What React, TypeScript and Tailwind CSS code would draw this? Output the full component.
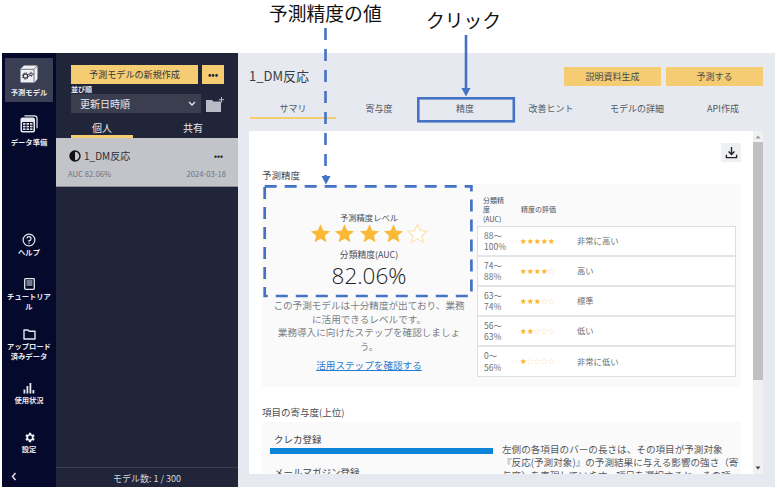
import React from "react";

const font = { fontFamily: '"Noto Sans CJK JP", "Noto Sans", sans-serif' };

function Star({ on, size }: { on: boolean; size: number }) {
  return (
    <svg width={size} height={size} viewBox="0 0 24 24" className="shrink-0">
      <path
        d="M12 1.500l3.100 7.200 7.800.7-5.900 5.100 1.800 7.600L12 18.100l-6.800 4 1.800-7.600-5.900-5.100 7.800-.7z"
        fill={on ? "#fbb938" : "#ffffff"}
        stroke={on ? "#fbb938" : "#fbe3b5"}
        strokeWidth={on ? 0 : 1.400}
      />
    </svg>
  );
}

function Stars({ n, size, gap }: { n: number; size: number; gap: string }) {
  return (
    <div className={`flex ${gap}`}>
      {[1, 2, 3, 4, 5].map((i) => (
        <Star key={i} on={i <= n} size={size} />
      ))}
    </div>
  );
}

function TopNav({ icon, label, active, cls }: { icon: React.ReactNode; label: string; active?: boolean; cls?: string }) {
  return (
    <div className={`flex h-[44px] w-[48px] flex-col items-center pt-[7px] text-center text-[7.300px] font-bold leading-[11px] text-[#e8e9ee] ${active ? "bg-[#3b3f53]" : ""} ${cls ?? ""}`}>
      {icon}
      <div className="mt-[4px]">{label}</div>
    </div>
  );
}

function BottomNav({ icon, label, cls }: { icon: React.ReactNode; label: React.ReactNode; cls?: string }) {
  return (
    <div className={`flex w-[54px] flex-col items-center text-center text-[7.300px] font-bold leading-[10px] text-[#e8e9ee] ${cls ?? ""}`}>
      <div className="flex h-[14px] items-center justify-center">{icon}</div>
      <div>{label}</div>
    </div>
  );
}

const rows = [
  ["88〜", "100%", 5, "非常に高い"],
  ["74〜", "88%", 4, "高い"],
  ["63〜", "74%", 3, "標準"],
  ["56〜", "63%", 2, "低い"],
  ["0〜", "56%", 1, "非常に低い"],
] as const;

const tabs = ["サマリ", "寄与度", "精度", "改善ヒント", "モデルの詳細", "API作成"];

export default function App() {
  return (
    <div className="relative h-[489px] w-[777px] overflow-hidden bg-white" style={font}>
      <div className="h-[53px]" />
      <div className="ml-[2px] flex h-[434px] w-[773px]">
        {/* icon rail */}
        <div className="flex w-[54px] shrink-0 flex-col items-center bg-[#050a2c] pt-[5px]">
          <TopNav
            active
            label="予測モデル"
            icon={
              <svg width="18" height="18" viewBox="0 0 18 18">
                <path d="M4 .5h12.500A1 1 0 0 1 17.500 1.500v12.500L14.500 17.500H1.500A1 1 0 0 1 .5 16.500V4z" fill="#f0f1f4" />
                <path d="M.8 4.300H14l3.300-3.300M14 4.300v13" stroke="#3b3f53" strokeWidth=".7" fill="none" />
                <circle cx="5.500" cy="11" r="2.100" fill="none" stroke="#2b2e3d" strokeWidth="1.100" />
                <circle cx="5.500" cy="11" r="3.200" fill="none" stroke="#2b2e3d" strokeWidth="1" strokeDasharray="1.200 1.300" />
                <circle cx="11" cy="9.300" r="1.300" fill="none" stroke="#2b2e3d" strokeWidth=".9" />
                <circle cx="11" cy="9.300" r="2.100" fill="none" stroke="#2b2e3d" strokeWidth=".8" strokeDasharray="1 1.100" />
              </svg>
            }
          />
          <TopNav
            cls="mt-[6px]"
            label="データ準備"
            icon={
              <svg width="18" height="18" viewBox="0 0 18 18" fill="none">
                <path d="M4.500 .8h10a2.500 2.500 0 0 1 2.500 2.500v10" stroke="#e8e9ee" strokeWidth="1.200" />
                <rect x=".5" y="2.500" width="14.500" height="15" rx="2" fill="#e8e9ee" />
                <path d="M2.500 7.500h10.500v8H2.500zM2.500 10.200h10.500M2.500 12.900h10.500M6 7.500v8M9.500 7.500v8" stroke="#050a2c" strokeWidth="1" />
              </svg>
            }
          />
          <BottomNav
            cls="mt-[81px]"
            label="ヘルプ"
            icon={
              <svg width="14" height="14" viewBox="0 0 14 14" fill="none" stroke="#e8e9ee" strokeWidth="1.200">
                <circle cx="7" cy="7" r="5.900" />
                <path d="M5 5.400A2 2 0 1 1 7 7.600v1.100" />
                <path d="M7 9.500v1.300" />
              </svg>
            }
          />
          <BottomNav
            cls="mt-[20px]"
            label={<>チュートリア<br />ル</>}
            icon={
              <svg width="11" height="12" viewBox="0 0 11 12">
                <rect x=".7" y=".7" width="9.600" height="10.600" rx=".8" fill="none" stroke="#e8e9ee" strokeWidth="1.300" />
                <path d="M2.500 3h6M2.500 5h6M2.500 7h6" stroke="#e8e9ee" strokeWidth="1.100" />
              </svg>
            }
          />
          <BottomNav
            cls="mt-[16px]"
            label={<>アップロード<br />済みデータ</>}
            icon={
              <svg width="13" height="11" viewBox="0 0 13 11" fill="none" stroke="#e8e9ee" strokeWidth="1.400">
                <path d="M1 1h4l1.200 1.300H12V10H1z" strokeLinejoin="round" />
              </svg>
            }
          />
          <BottomNav
            cls="mt-[20px]"
            label="使用状況"
            icon={
              <svg width="12" height="11" viewBox="0 0 12 11" fill="#e8e9ee">
                <rect x="0.500" y="6.500" width="1.800" height="4" />
                <rect x="3.500" y="3" width="1.800" height="7.500" />
                <rect x="6.500" y="0" width="1.800" height="10.500" />
                <rect x="9.500" y="7" width="1.800" height="3.500" />
              </svg>
            }
          />
          <BottomNav
            cls="mt-[25px]"
            label="設定"
            icon={
              <svg width="13" height="13" viewBox="0 0 24 24" fill="#f0f1f4">
                <path d="M19.400 13a7.600 7.600 0 0 0 0-2l2.100-1.600-2-3.500-2.500 1a7.600 7.600 0 0 0-1.700-1L15 3.200h-4l-.4 2.700a7.600 7.600 0 0 0-1.700 1l-2.500-1-2 3.500L6.500 11a7.600 7.600 0 0 0 0 2l-2.100 1.600 2 3.500 2.500-1a7.600 7.600 0 0 0 1.700 1l.4 2.700h4l.4-2.700a7.600 7.600 0 0 0 1.700-1l2.500 1 2-3.500zM13 15.500a3.500 3.500 0 1 1 0-7 3.500 3.500 0 0 1 0 7z" />
              </svg>
            }
          />
          <div className="mt-auto w-full pb-[6px] pl-[9px] text-[#e8e9ee]">
            <svg width="6" height="9" viewBox="0 0 6 9" fill="none" stroke="currentColor" strokeWidth="1.400" className="block">
              <path d="M4.500 1L1.500 4.500 4.500 8" />
            </svg>
          </div>
        </div>

        {/* model list */}
        <div className="flex w-[182px] shrink-0 flex-col bg-[#20253a]">
          <div className="flex gap-[4px] pl-[15px] pt-[12px]">
            <div className="flex h-[19px] w-[127px] items-center justify-center bg-[#f5cc72] text-[9.100px] text-[#33363f]">予測モデルの新規作成</div>
            <div className="flex h-[19px] w-[22px] items-center justify-center bg-[#f5cc72] text-[9px] font-bold leading-none text-[#222]">•••</div>
          </div>
          <div className="ml-[15px] h-[10px] text-[7px] font-bold leading-[10px] text-[#e8e9ee]">並び順</div>
          <div className="flex items-center gap-[5px] pl-[15px]">
            <div className="flex h-[19px] w-[130px] items-center justify-between bg-[#3b3e4f] pl-[9px] pr-[5px] text-[10px] text-[#e8e9ee]">
              <span>更新日時順</span>
              <svg width="8" height="6" viewBox="0 0 8 6" fill="none" stroke="#e8e9ee" strokeWidth="1.300">
                <path d="M1 1l3 3 3-3" />
              </svg>
            </div>
            <svg width="18" height="15" viewBox="0 0 18 15" fill="#b9bcc6" className="mt-[2px]">
              <path d="M0 3h6l1.500 1.500H15V15H0z" />
              <path d="M15.500 0v5.500M12.800 2.700h5.200" stroke="#b9bcc6" strokeWidth="1" fill="none" />
            </svg>
          </div>
          <div className="flex h-[22px] items-center pl-[15px] pt-[6px] text-[10px] text-[#e8e9ee]">
            <div className="w-[62px] text-center">個人</div>
            <div className="pl-[50px]">共有</div>
          </div>
          <div className="ml-[15px] h-[3px] w-[62px] bg-[#f5cc72]" />
          <div className="h-[49px] border-b border-[#8d909b] bg-[#c2c4c9] px-[12px] pt-[4px]">
            <div className="flex h-[27px] items-center justify-between pl-[1px] pr-[3px]">
              <div className="flex items-center gap-[3px] text-[10px] text-[#2c2f38]">
                <svg width="12" height="12" viewBox="0 0 12 12">
                  <circle cx="6" cy="6" r="5" fill="none" stroke="#111" strokeWidth="1.400" />
                  <path d="M6 1a5 5 0 0 0 0 10z" fill="#111" />
                </svg>
                <span>1_DM反応</span>
              </div>
              <span className="text-[8px] font-bold leading-none text-[#222]">•••</span>
            </div>
            <div className="flex justify-between text-[7.700px] leading-[9px] text-[#70737d]">
              <span>AUC 82.06%</span>
              <span>2024-03-18</span>
            </div>
          </div>
          <div className="flex-1" />
          <div className="flex h-[20px] items-center justify-center border-t border-[#3b3e4f] pt-[2px] text-[9px] text-[#d5d7de]">モデル数: 1 / 300</div>
        </div>

        {/* main */}
        <div className="flex min-w-0 flex-1 flex-col bg-[#e6e9ef]">
          <div className="flex h-[44px] items-center justify-between pl-[11px] pr-[12px] pt-[2px]">
            <div className="text-[13px] text-[#3a3d46]">1_DM反応</div>
            <div className="flex gap-[5px] pt-[1px]">
              <div className="flex h-[19px] w-[97px] items-center justify-center bg-[#f5cc72] text-[9px] text-[#4a4a48]">説明資料生成</div>
              <div className="flex h-[19px] w-[97px] items-center justify-center bg-[#f5cc72] text-[9px] text-[#4a4a48]">予測する</div>
            </div>
          </div>
          <div className="flex h-[22px] pl-[12px]">
            {tabs.map((t, i) => (
              <div key={t} className={`flex w-[86px] items-center justify-center border-b-2 pt-[3px] text-[9px] text-[#55585f] ${i === 0 ? "border-[#f5cc72]" : "border-transparent"}`}>
                {t}
              </div>
            ))}
          </div>
          <div className="mt-[12px] flex min-h-0 flex-1">
            <div className="ml-[11px] w-[504px] overflow-hidden bg-white pl-[13px] pr-[12px] text-[#4a4d55]">
              <div className="flex h-[38px] justify-end pt-[12px]">
                <div className="flex h-[19px] w-[20px] items-center justify-center bg-[#eef0f3]">
                  <svg width="13" height="13" viewBox="0 0 14 14" fill="none" stroke="#222" strokeWidth="1.500">
                    <path d="M7 1v8M3.800 6L7 9.200 10.200 6M1.500 9.500v3h11v-3" />
                  </svg>
                </div>
              </div>
              <div className="text-[9.500px] leading-[13px]">予測精度</div>
              <div className="mt-[2px] flex h-[203px] bg-[#fafafa]">
                <div className="flex w-[214px] shrink-0 flex-col items-center px-[9px] pt-[27px] text-center">
                  <div className="text-[8.300px] leading-[12px]">予測精度レベル</div>
                  <div className="mb-[5px]">
                    <Stars n={4} size={21} gap="gap-[3.300px]" />
                  </div>
                  <div className="text-[8.800px] leading-[12px]">分類精度(AUC)</div>
                  <div className="mt-[2px] text-[22.500px] font-light leading-[26px] text-[#222]" style={{ fontFamily: '"Open Sans", sans-serif' }}>82.06%</div>
                  <div className="mt-[10px] text-[9.600px] leading-[13.500px] text-[#7c7f86]">
                    この予測モデルは十分精度が出ており、業務<br />に活用できるレベルです。<br />業務導入に向けたステップを確認しましょ<br />う。
                  </div>
                  <div className="mt-[6px] text-[9.600px] leading-[13px] text-[#2a7bd0] underline">活用ステップを確認する</div>
                </div>
                <div className="min-w-0 flex-1 pl-[1px] pr-[5px] pt-[10px]">
                  <div className="flex h-[32px] items-center pl-[6px] text-[7px] leading-[9.500px]">
                    <div className="w-[38px]">分類精<br />度<br />(AUC)</div>
                    <div>精度の評価</div>
                  </div>
                  <div className="border border-[#dcdee2] bg-white">
                    {rows.map(([a, b, n, txt]) => (
                      <div key={txt} className="flex h-[30px] items-center border-b-2 border-[#e3e5e8] pl-[6px] text-[8.500px] leading-[11.500px] text-[#6a6d74] last:h-[29px] last:border-b-0">
                        <div className="w-[36px]">{a}<br />{b}</div>
                        <div className="w-[57px]"><Stars n={n} size={6.500} gap="gap-[.5px]" /></div>
                        <div className="text-[8.300px]">{txt}</div>
                      </div>
                    ))}
                  </div>
                </div>
              </div>
              <div className="mt-[19px] text-[9.500px] leading-[13px]">項目の寄与度(上位)</div>
              <div className="mt-[3px] flex h-[60px] bg-[#fafafa]">
                <div className="w-[240px] shrink-0 pl-[8px] pt-[11px] text-[9.500px] text-[#3c3f46]">
                  <div className="pl-[4px] leading-[13px]">クレカ登録</div>
                  <div className="mt-[2px] h-[6px] w-[223px] bg-[#0a84d6]" />
                  <div className="mt-[12px] pl-[4px] leading-[13px]">メールマガジン登録</div>
                </div>
                <div className="min-w-0 flex-1 whitespace-nowrap pt-[21px] text-[9.600px] leading-[13px] text-[#55585f]">
                  左側の各項目のバーの長さは、その項目が予測対象<br />
                  『反応(予測対象)』の予測結果に与える影響の強さ（寄<br />
                  与度）を表現しています。項目を選択すると、その項
                </div>
              </div>
            </div>
            <div className="flex w-[10px] shrink-0 flex-col items-center bg-[#f1f1f1]">
              <svg width="6" height="6" viewBox="0 0 6 6" className="mt-[3px] shrink-0"><path d="M3 1.500L5.500 4.500H.5z" fill="#999" /></svg>
              <div className="mt-[2px] h-[238px] w-full bg-[#c1c1c1]" />
              <div className="flex-1" />
              <svg width="6" height="6" viewBox="0 0 6 6" className="mb-[3px] shrink-0"><path d="M3 4.500L5.500 1.500H.5z" fill="#444" /></svg>
            </div>
          </div>
          <div className="h-[13px]" />
        </div>
      </div>

      {/* annotations over the screenshot */}
      <div className="absolute left-[269px] top-[1px] text-[18.800px] leading-[24px] text-[#111]">予測精度の値</div>
      <div className="absolute left-[426px] top-[8px] text-[18.800px] leading-[24px] text-[#111]">クリック</div>
      <svg width="777" height="489" className="pointer-events-none absolute left-0 top-0">
        <path d="M325.500 28V177" stroke="#4472c4" strokeWidth="2.600" strokeDasharray="12 9" fill="none" />
        <path d="M321.500 176h9l-4.500 8.500z" fill="#4472c4" />
        <path d="M466 35V90" stroke="#4472c4" strokeWidth="2.600" fill="none" />
        <path d="M461.500 88h9l-4.500 8.500z" fill="#4472c4" />
        <rect x="418.300" y="98.300" width="95.500" height="23" fill="none" stroke="#4472c4" strokeWidth="2.600" />
        <rect x="264.700" y="186.300" width="206.700" height="109.700" fill="none" stroke="#4472c4" strokeWidth="2.700" strokeDasharray="12 8" />
      </svg>
    </div>
  );
}
